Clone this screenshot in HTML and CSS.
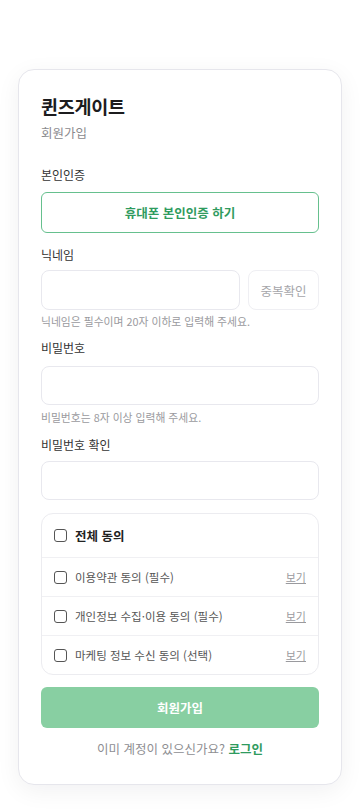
FILE: index.html
```html
<!DOCTYPE html>
<html lang="ko">
<head>
<meta charset="utf-8">
<meta name="viewport" content="width=device-width, initial-scale=1">
<title>회원가입</title>
<link rel="stylesheet" href="styles.css">
</head>
<body>
<main class="card">
  <h1 class="title">퀸즈게이트</h1>
  <p class="subtitle">회원가입</p>

  <div class="label label-first">본인인증</div>
  <button class="verify-btn" type="button">휴대폰 본인인증 하기</button>

  <div class="label label-nick">닉네임</div>
  <div class="nick-row">
    <input class="input nick-input" type="text">
    <button class="dup-btn" type="button">중복확인</button>
  </div>
  <div class="hint">닉네임은 필수이며 20자 이하로 입력해 주세요.</div>

  <div class="label label-pw">비밀번호</div>
  <input class="input input-pw" type="password">
  <div class="hint hint-pw">비밀번호는 8자 이상 입력해 주세요.</div>

  <div class="label label-pw2">비밀번호 확인</div>
  <input class="input input-pw2" type="password">

  <div class="agree">
    <label class="agree-row agree-all">
      <span class="check"></span>
      <span class="agree-text">전체 동의</span>
    </label>
    <div class="agree-row">
      <span class="check"></span>
      <span class="agree-text">이용약관 동의 (필수)</span>
      <a class="view">보기</a>
    </div>
    <div class="agree-row">
      <span class="check"></span>
      <span class="agree-text">개인정보 수집·이용 동의 (필수)</span>
      <a class="view">보기</a>
    </div>
    <div class="agree-row">
      <span class="check"></span>
      <span class="agree-text">마케팅 정보 수신 동의 (선택)</span>
      <a class="view">보기</a>
    </div>
  </div>

  <button class="submit" type="button">회원가입</button>
  <p class="login">이미 계정이 있으신가요? <a class="login-link">로그인</a></p>
</main>
</body>
</html>
```
FILE: styles.css
```css
* { box-sizing: border-box; }
html, body { margin: 0; padding: 0; background: #ffffff; }
body {
  font-family: "Noto Sans CJK KR", "Noto Sans", sans-serif;
  color: #222;
  padding-top: 69px;
  padding-bottom: 28px;
}
.card {
  margin: 0 18px;
  border: 1px solid #e6e6ec;
  border-radius: 16px;
  background: #fff;
  box-shadow: 0 6px 24px rgba(20, 20, 40, 0.06);
  padding: 24px 22px 27px;
  display: flex;
  flex-direction: column;
}
.title {
  margin: 0;
  font-size: 18.5px;
  line-height: 24px;
  font-weight: 700;
  color: #1c1c1e;
  letter-spacing: -0.3px;
}
.subtitle {
  margin: 6px 0 0;
  font-size: 12.5px;
  line-height: 18px;
  color: #8a8a8e;
}
.label {
  font-size: 12px;
  line-height: 16px;
  color: #333;
}
.label-first { margin-top: 25px; }
.label-nick { margin-top: 14px; }
.label-pw { margin-top: 12px; }
.label-pw2 { margin-top: 13px; }
.verify-btn {
  margin-top: 9px;
  height: 41px;
  border: 1.5px solid #66c08e;
  border-radius: 6px;
  background: #fff;
  color: #2f9b5e;
  font-family: inherit;
  font-weight: 700;
  font-size: 12.5px;
  cursor: pointer;
}
.nick-row {
  margin-top: 7px;
  display: flex;
  gap: 8px;
}
.input {
  display: block;
  width: 100%;
  height: 40px;
  border: 1px solid #e8e8ee;
  border-radius: 8px;
  background: #fff;
  font-family: inherit;
}
.nick-input { flex: 1; min-width: 0; }
.dup-btn {
  flex: 0 0 71px;
  height: 40px;
  border: 1px solid #efeff3;
  border-radius: 8px;
  background: #fff;
  color: #a6a6aa;
  font-family: inherit;
  font-size: 12.5px;
}
.hint {
  margin-top: 4px;
  font-size: 10.8px;
  line-height: 14px;
  color: #9a9a9e;
}
.hint-pw { margin-top: 5px; }
.input-pw { margin-top: 10px; height: 39px; }
.input-pw2 { margin-top: 8px; height: 39px; }
.agree {
  margin-top: 13px;
  border: 1px solid #ececf0;
  border-radius: 12px;
  display: flex;
  flex-direction: column;
}
.agree-row {
  display: flex;
  align-items: center;
  gap: 8px;
  padding: 0 12px;
  height: 39px;
  border-top: 1px solid #f0f0f3;
}
.agree-row.agree-all {
  height: 43px;
  border-top: none;
}
.check {
  width: 13px;
  height: 13px;
  border: 1.3px solid #555;
  border-radius: 3px;
  flex: 0 0 auto;
}
.agree-text {
  flex: 1;
  font-size: 11.5px;
  color: #555;
}
.agree-all .agree-text {
  font-size: 12.5px;
  font-weight: 700;
  color: #222;
}
.view {
  font-size: 11px;
  color: #9a9a9e;
  text-decoration: underline;
}
.submit {
  margin-top: 12px;
  height: 41px;
  border: none;
  border-radius: 6px;
  background: #88cfa2;
  color: #fff;
  font-family: inherit;
  font-weight: 700;
  font-size: 12.5px;
}
.login {
  margin: 13px 0 0;
  text-align: center;
  font-size: 12.5px;
  line-height: 16px;
  color: #8e8e92;
}
.login-link {
  color: #2f9b5e;
  font-weight: 700;
}
```
